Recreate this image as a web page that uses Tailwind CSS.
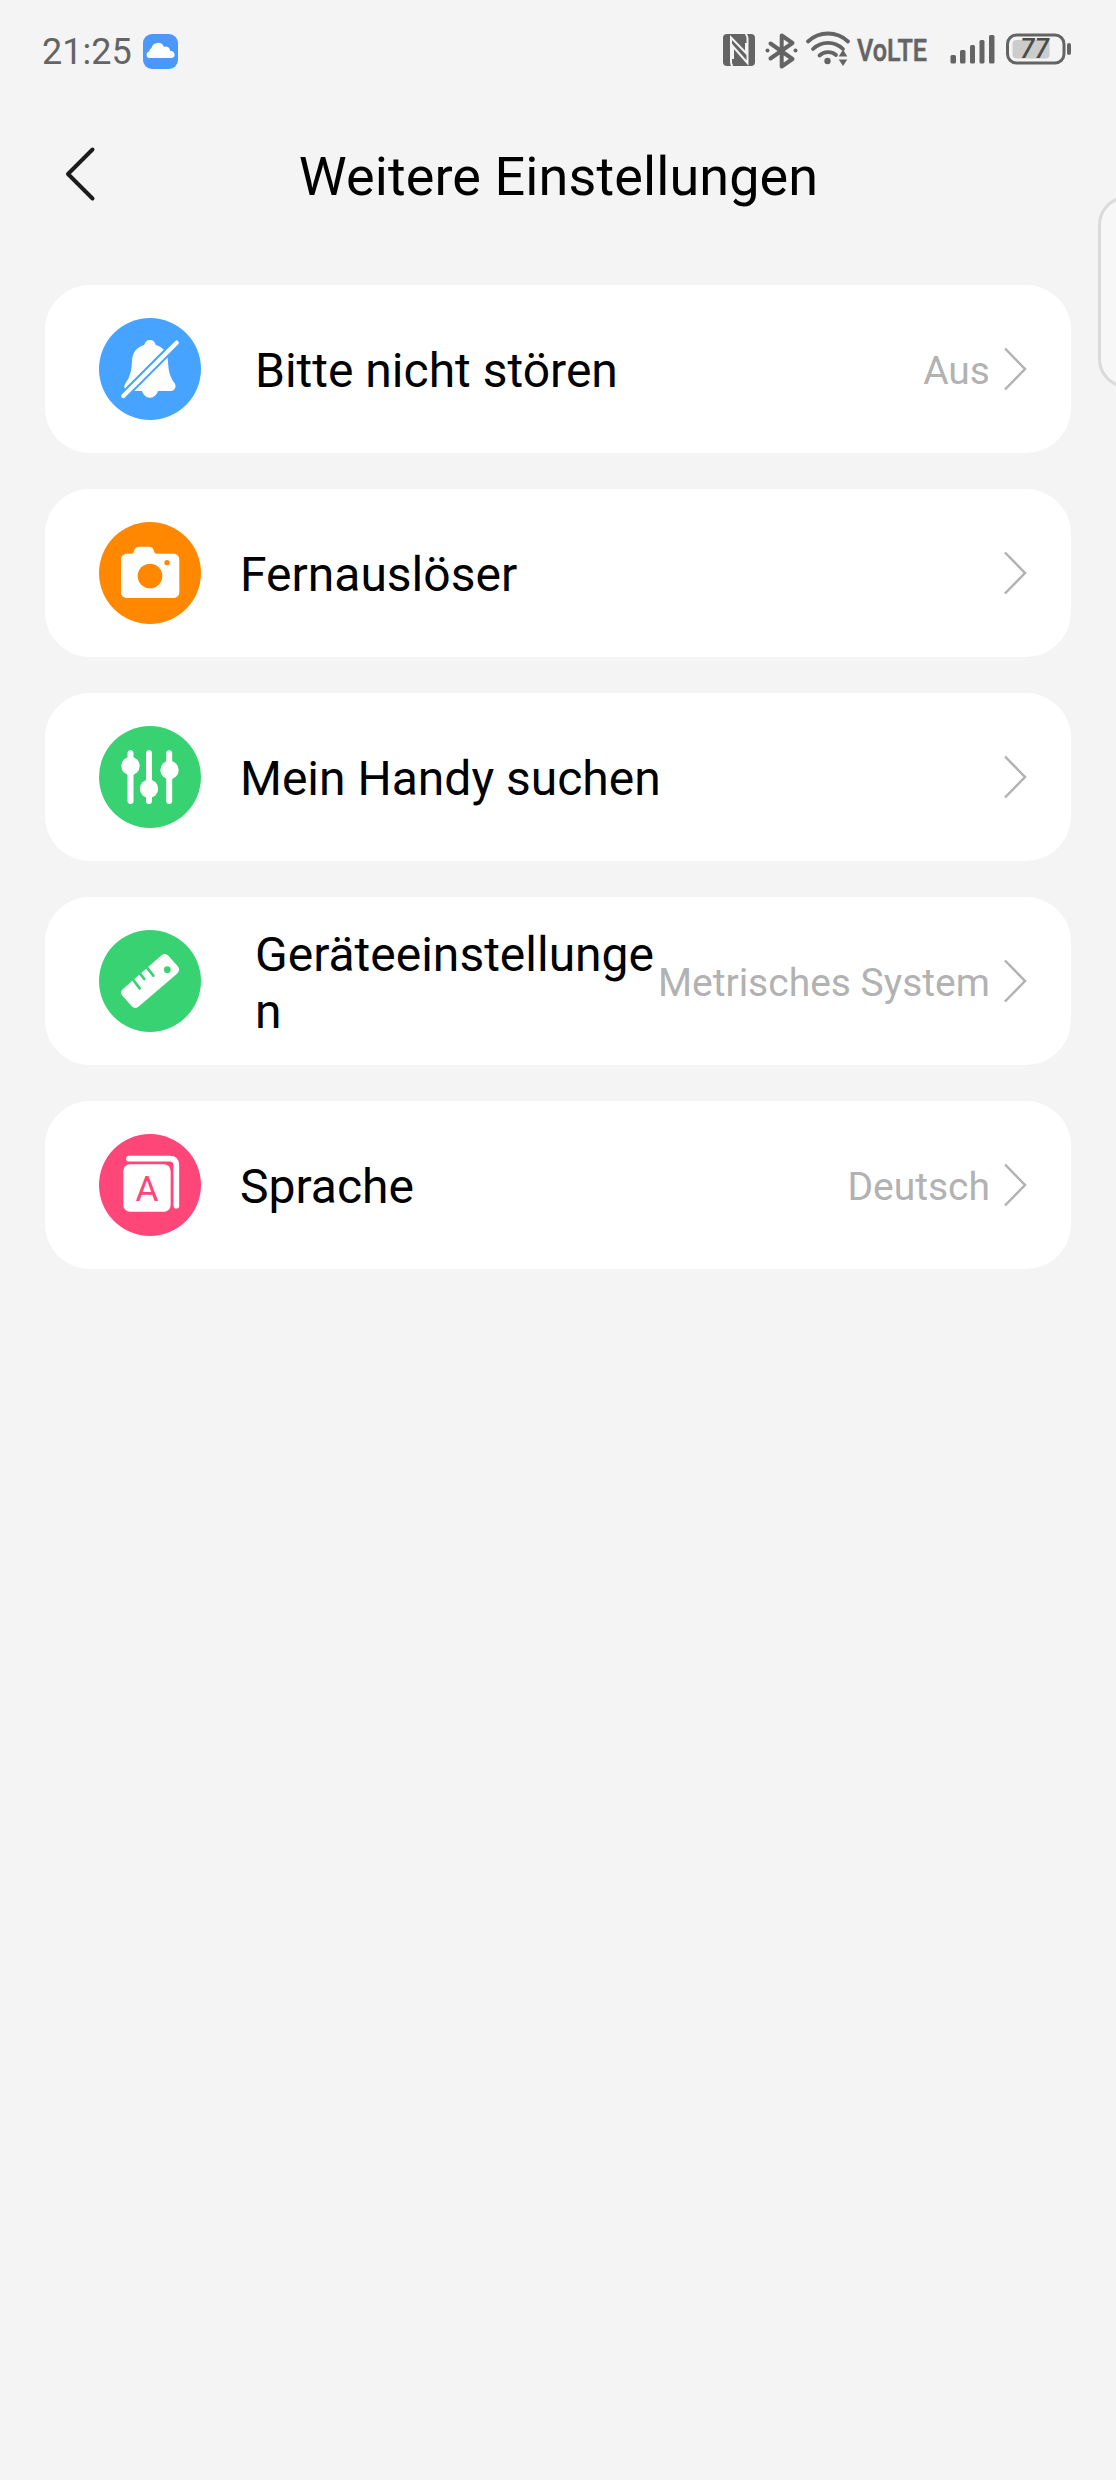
<!DOCTYPE html>
<html lang="de">
<head>
    <meta charset="UTF-8">
    <meta name="viewport" content="width=device-width, initial-scale=1.0">
    <title>Weitere Einstellungen</title>
    <script src="https://cdn.jsdelivr.net/npm/@tailwindcss/browser@4"></script>
</head>
<body class="relative h-[2480px] overflow-hidden bg-[#f4f4f4] font-[Roboto,sans-serif] text-black">

    <!-- Status bar -->
    <div class="flex h-[102px] items-center justify-between pl-[42px] pr-[45px] text-[#646464]">
        <div class="flex items-center gap-[11px]">
            <span id="clock" class="pt-[2px] text-[36px] leading-[42px]">21:25</span>
            <svg class="h-[35px] w-[35px]" viewBox="0 0 35 35">
                <rect width="35" height="35" rx="9" fill="#4b98fb"/>
                <path d="M6.500 24a3.300 3.300 0 0 1-.3-6.500 4 4 0 0 1 2.300-3.600 6.600 6.600 0 0 1 12.500-1 4.600 4.600 0 0 1 6.300 4.300 3.400 3.400 0 0 1 1.600 6.800z" fill="#fff"/>
            </svg>
        </div>

        <svg class="h-[40px] w-[350px]" viewBox="0 0 350 40" fill="none">
            <!-- NFC -->
            <rect x="2" y="3" width="32" height="32" rx="4" fill="#646464"/>
            <path d="M11.500 35q-1.500-1.500-1.500-4V6.500L25 22V12" stroke="#f4f4f4" stroke-width="2"/>
            <path d="M24.500 3q2 1.500 2 4v25L12 15.500V28" stroke="#f4f4f4" stroke-width="2"/>
            <!-- Bluetooth -->
            <path d="M49.500 12.500 71.500 28l-10.800 7.500V4.500L71.500 12 49.500 27.500" stroke="#646464" stroke-width="4" stroke-linecap="round" stroke-linejoin="round"/>
            <circle cx="46.500" cy="19.500" r="2" fill="#646464"/>
            <circle cx="74.500" cy="19.500" r="2" fill="#646464"/>
            <!-- Wi-Fi -->
            <g stroke="#646464" stroke-width="3.800" stroke-linecap="round">
                <path d="M87 10.500a29 29 0 0 1 40 0"/>
                <path d="M92 18a21.500 21.500 0 0 1 30 0"/>
                <path d="M98.500 24.500a12.500 12.500 0 0 1 16.500-.5"/>
            </g>
            <circle cx="106.500" cy="30" r="3.200" fill="#646464"/>
            <path d="m122 18.500 4.300 7h-8.600zM122 35l4.300-6.500h-8.600z" fill="#646464"/>
            <!-- VoLTE -->
            <text x="136" y="30" textLength="70" lengthAdjust="spacingAndGlyphs" class="text-[31.500px] font-medium" fill="#646464" stroke="#646464" stroke-width="0.600">VoLTE</text>
            <!-- Signal -->
            <g fill="#646464">
                <rect x="229.500" y="24" width="5.500" height="8.500" rx="1.500"/>
                <rect x="239" y="19" width="5.500" height="13.500" rx="1.500"/>
                <rect x="249" y="14" width="5" height="18.500" rx="1.500"/>
                <rect x="258.500" y="9" width="5" height="23.500" rx="1.500"/>
                <rect x="268" y="4" width="5.500" height="28.500" rx="1.500"/>
            </g>
            <!-- Battery -->
            <rect x="286.500" y="4" width="56.500" height="28" rx="9" stroke="#646464" stroke-width="3"/>
            <rect x="291.500" y="9" width="37" height="18.500" rx="4" fill="#ccc"/>
            <rect x="346" y="12" width="4" height="12" rx="2" fill="#646464"/>
            <text x="299" y="27" textLength="29" lengthAdjust="spacingAndGlyphs" class="text-[27px] font-medium italic" fill="#4c4c4c">77</text>
        </svg>
    </div>

    <!-- Header -->
    <div class="grid h-[183px] grid-cols-[116px_1fr_116px] items-start pt-[38px]">
        <svg class="ml-[60px] mt-[4px] h-[60px] w-[40px]" viewBox="0 0 40 60" fill="none">
            <path d="M32.500 5.500 8 30l24.500 24.500" stroke="#1c1c1c" stroke-width="4" stroke-linecap="round" stroke-linejoin="round"/>
        </svg>
        <h1 class="pl-[1px] pt-[1px] text-center text-[54px] leading-[72px] tracking-[0.1px]">Weitere Einstellungen</h1>
    </div>

    <!-- Settings list -->
    <div class="flex flex-col gap-[36px] px-[45px]">
        <div class="flex h-[168px] items-center rounded-[45px] bg-white pl-[54px] pr-[44px]">
            <svg class="h-[102px] w-[102px] shrink-0" viewBox="0 0 306 306">
                <circle cx="153" cy="153" r="153" fill="#46a3ff"/>
                <path d="M153 66c9 0 15 6 17 14 24 8 36 24 37 50 1 30 7 50 20 66 6 10 1 22-10 23h-40c-4 12-12 20-24 20s-20-8-24-20H90c-14-2-18-14-10-24 12-16 18-36 19-65 1-26 13-42 37-50 2-8 8-14 17-14z" fill="#fff"/>
                <path d="M233 74 73 234" stroke="#46a3ff" stroke-width="25"/>
                <path d="M233 74 73 234" stroke="#fff" stroke-width="13" stroke-linecap="round"/>
            </svg>
            <span class="ml-[54px] flex-1 pt-[2px] text-[48px] leading-[57px]">Bitte nicht stören</span>
            <span class="pt-[3px] text-[39px] leading-[46px] text-[#b2b2b2]">Aus</span>
            <svg class="ml-[14px] h-[44px] w-[23px] shrink-0" viewBox="0 0 23 44" fill="none"><path d="m1 1.500 20 20.500L1 42.500" stroke="#b2b2b2" stroke-width="2.500"/></svg>
        </div>

        <div class="flex h-[168px] items-center rounded-[45px] bg-white pl-[54px] pr-[44px]">
            <svg class="h-[102px] w-[102px] shrink-0" viewBox="0 0 306 306">
                <circle cx="153" cy="153" r="153" fill="#ff8800"/>
                <path d="M84 95h12c6 0 8-3 9-8 2-9 8-13 16-13h28c9 0 14 4 16 13 1 5 3 8 9 8h49c11 0 18 7 18 18v97c0 11-7 18-18 18H84c-11 0-18-7-18-18v-97c0-11 7-18 18-18z" fill="#fff"/>
                <circle cx="153" cy="162" r="37" fill="#ff8800"/>
                <circle cx="204" cy="122" r="8" fill="#ff8800"/>
            </svg>
            <span class="ml-[39px] flex-1 pt-[2px] text-[48px] leading-[57px]">Fernauslöser</span>
            <svg class="ml-[14px] h-[44px] w-[23px] shrink-0" viewBox="0 0 23 44" fill="none"><path d="m1 1.500 20 20.500L1 42.500" stroke="#b2b2b2" stroke-width="2.500"/></svg>
        </div>

        <div class="flex h-[168px] items-center rounded-[45px] bg-white pl-[54px] pr-[44px]">
            <svg class="h-[102px] w-[102px] shrink-0" viewBox="0 0 306 306">
                <circle cx="153" cy="153" r="153" fill="#39d272"/>
                <path d="M94.500 82v143M150 82v143M210.500 82v143" stroke="#fff" stroke-width="18" stroke-linecap="round"/>
                <circle cx="94.500" cy="120" r="27.500" fill="#fff"/>
                <circle cx="150" cy="188" r="27.500" fill="#fff"/>
                <circle cx="211.500" cy="132" r="27.500" fill="#fff"/>
            </svg>
            <span class="ml-[39px] flex-1 pt-[2px] text-[48px] leading-[57px]">Mein Handy suchen</span>
            <svg class="ml-[14px] h-[44px] w-[23px] shrink-0" viewBox="0 0 23 44" fill="none"><path d="m1 1.500 20 20.500L1 42.500" stroke="#b2b2b2" stroke-width="2.500"/></svg>
        </div>

        <div class="flex h-[168px] items-center rounded-[45px] bg-white pl-[54px] pr-[44px]">
            <svg class="h-[102px] w-[102px] shrink-0" viewBox="0 0 306 306">
                <circle cx="153" cy="153" r="153" fill="#39d272"/>
                <path d="M71 178 186 77c8-7 16-7 23 1l27 31c7 8 6 15-2 22L120 229c-8 7-16 6-23-2l-26-29c-6-7-7-13 0-20z" fill="#fff"/>
                <path d="m103 150 19 25M123 131l13 16M144 113l19 24" stroke="#39d272" stroke-width="8" stroke-linecap="round"/>
                <circle cx="205" cy="119" r="10" fill="#39d272"/>
            </svg>
            <span class="ml-[54px] min-w-0 flex-1 break-all pt-[3px] text-[48px] leading-[57px]">Geräteeinstellungen</span>
            <span class="whitespace-nowrap pt-[3px] text-[39px] leading-[46px] text-[#b2b2b2]">Metrisches System</span>
            <svg class="ml-[14px] h-[44px] w-[23px] shrink-0" viewBox="0 0 23 44" fill="none"><path d="m1 1.500 20 20.500L1 42.500" stroke="#b2b2b2" stroke-width="2.500"/></svg>
        </div>

        <div class="flex h-[168px] items-center rounded-[45px] bg-white pl-[54px] pr-[44px]">
            <svg class="h-[102px] w-[102px] shrink-0" viewBox="0 0 306 306" fill="none">
                <circle cx="153" cy="153" r="153" fill="#ff4678"/>
                <rect x="73" y="91" width="142" height="142" rx="20" fill="#fff"/>
                <path d="M90 74h122c14 0 20 7 20 20v121" stroke="#fff" stroke-width="17" stroke-linecap="round"/>
                <text x="144" y="202" text-anchor="middle" class="text-[106px] font-normal" fill="#ff4678">A</text>
            </svg>
            <span class="ml-[39px] flex-1 pt-[2px] text-[48px] leading-[57px]">Sprache</span>
            <span class="pt-[3px] text-[39px] leading-[46px] text-[#b2b2b2]">Deutsch</span>
            <svg class="ml-[14px] h-[44px] w-[23px] shrink-0" viewBox="0 0 23 44" fill="none"><path d="m1 1.500 20 20.500L1 42.500" stroke="#b2b2b2" stroke-width="2.500"/></svg>
        </div>
    </div>

    <!-- Edge panel handle, runs off the right side -->
    <div class="absolute -right-[40px] top-[196px] h-[192px] w-[58px] rounded-[30px] border-[3px] border-[#dadada] bg-[#f7f7f7]"></div>

</body>
</html>
